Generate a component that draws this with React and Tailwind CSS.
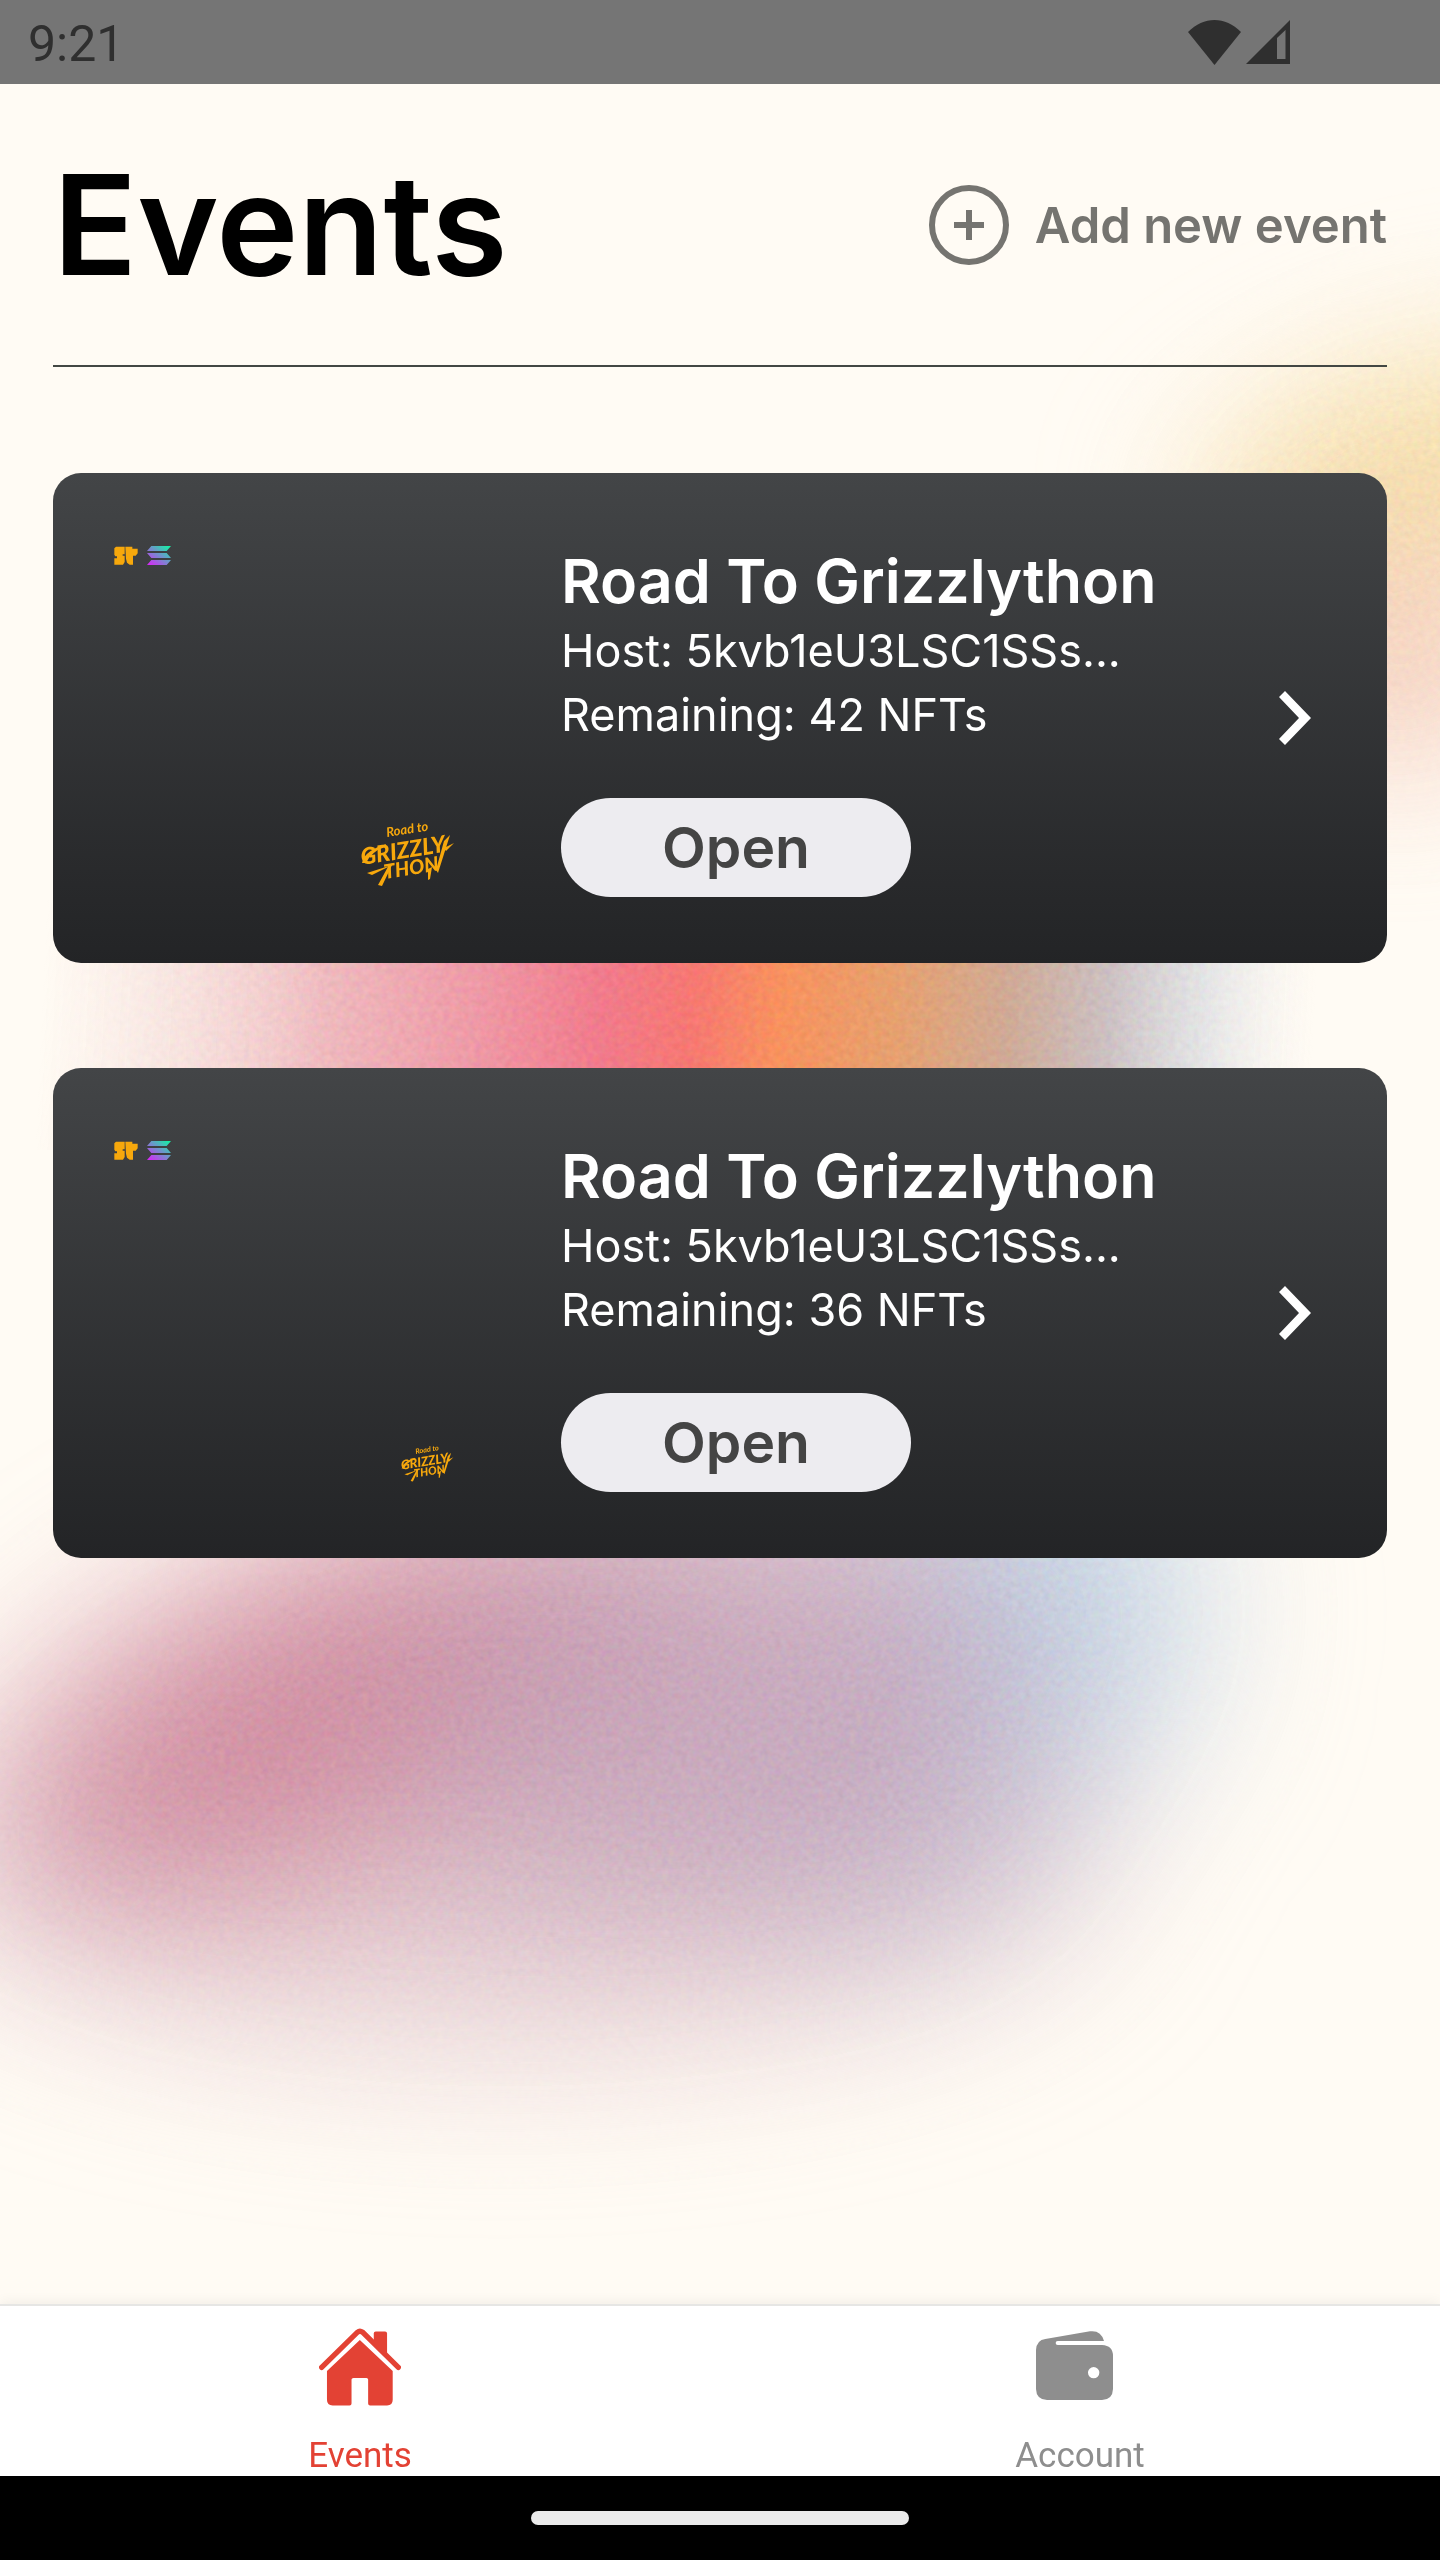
const EVENTS = [
  { id: 1, title: 'Road To Grizzlython', host: '5kvb1eU3LSC1SSs...', remaining: 42, artClass: 'h-[64px] w-[92px]' },
  { id: 2, title: 'Road To Grizzlython', host: '5kvb1eU3LSC1SSs...', remaining: 36, artClass: 'h-[36px] w-[53px]' },
];

function Backdrop() {
  return (
    <svg
      aria-hidden="true"
      className="absolute inset-0 h-full w-full"
      viewBox="0 0 1440 2304"
      preserveAspectRatio="none"
    >
      <defs>
        <filter id="soft" filterUnits="userSpaceOnUse" x="-400" y="900" width="2200" height="1800" colorInterpolationFilters="sRGB">
          <feGaussianBlur stdDeviation="85" />
        </filter>
        <filter id="softer" filterUnits="userSpaceOnUse" x="800" y="0" width="1200" height="1200" colorInterpolationFilters="sRGB">
          <feGaussianBlur stdDeviation="75" />
        </filter>
        <filter id="grain" filterUnits="userSpaceOnUse" x="0" y="0" width="1440" height="2304" colorInterpolationFilters="sRGB">
          <feTurbulence type="fractalNoise" baseFrequency="0.16" numOctaves="2" seed="4" result="noise" />
          <feColorMatrix in="noise" type="matrix" values="1 0 0 0 0.25  0 1 0 0 0.2  0 0 1 0 0.2  0 0 0 0 0.1" />
          <feComposite in2="SourceGraphic" operator="in" result="speckle" />
          <feMerge>
            <feMergeNode in="SourceGraphic" />
            <feMergeNode in="speckle" />
          </feMerge>
        </filter>
        <linearGradient id="band" gradientUnits="userSpaceOnUse" x1="40" y1="1050" x2="1310" y2="1110">
          <stop offset="0" stopColor="#fbe5e0" stopOpacity="0" />
          <stop offset="0.1" stopColor="#f9dcd9" stopOpacity="0.6" />
          <stop offset="0.22" stopColor="#f4bcc1" />
          <stop offset="0.34" stopColor="#f498a6" />
          <stop offset="0.44" stopColor="#f87588" />
          <stop offset="0.51" stopColor="#fd726c" />
          <stop offset="0.58" stopColor="#ff8f55" />
          <stop offset="0.67" stopColor="#ec9f68" />
          <stop offset="0.76" stopColor="#d2aa94" />
          <stop offset="0.84" stopColor="#cec3c6" />
          <stop offset="0.91" stopColor="#dfe1e5" stopOpacity="0.8" />
          <stop offset="1" stopColor="#f6f6f4" stopOpacity="0" />
        </linearGradient>
      </defs>
      <g filter="url(#grain)">
        <ellipse cx="1430" cy="480" rx="230" ry="110" fill="#fbe2a8" transform="rotate(-15 1430 480)" filter="url(#softer)" />
        <ellipse cx="1400" cy="650" rx="110" ry="120" fill="#f6c2ac" opacity="0.75" filter="url(#softer)" />
        <rect x="30" y="900" width="1310" height="250" fill="url(#band)" />
        <g filter="url(#soft)">
          <ellipse cx="500" cy="1850" rx="580" ry="190" fill="#dfc0ca" opacity="0.75" />
          <ellipse cx="1030" cy="1610" rx="160" ry="190" fill="#c3d6e9" />
          <ellipse cx="880" cy="1790" rx="210" ry="160" fill="#bfb4cc" opacity="0.7" />
          <ellipse cx="360" cy="1690" rx="380" ry="150" fill="#d28a9f" transform="rotate(-22 360 1690)" />
          <ellipse cx="700" cy="1690" rx="300" ry="210" fill="#c6a1b9" transform="rotate(-20 700 1690)" opacity="0.8" />
        </g>
      </g>
    </svg>
  );
}

function WifiIcon() {
  return (
    <svg aria-hidden="true" className="h-[45px] w-[53px]" viewBox="0 0 53 45">
      <path d="M0 12C8 4 17 0 26.500 0S45 4 53 12L26.500 45Z" fill="#2f2f2f" />
    </svg>
  );
}

function SignalIcon() {
  return (
    <svg aria-hidden="true" className="h-[44px] w-[44px]" viewBox="0 0 44 44">
      <path fillRule="evenodd" d="M0 44L44 0V44ZM31 18V39H39.500V10Z" fill="#2f2f2f" />
    </svg>
  );
}

function PlusCircle() {
  return (
    <svg aria-hidden="true" className="h-[80px] w-[80px]" viewBox="0 0 80 80" fill="none" stroke="currentColor" strokeWidth="6">
      <circle cx="40" cy="40" r="37" />
      <path d="M25 40H55M40 25V55" />
    </svg>
  );
}

function BadgeMark() {
  return (
    <svg aria-hidden="true" className="h-[19px] w-[24px]" viewBox="0 0 70 57" fill="#f7a80c">
      <path d="M5 2H31V25H25V29H31V48L26 56H0V37H8V31H3L0 26V7Z" />
      <path d="M33 2H54V8H70V22L64 29H56V56H46L38 50L35 38Z" />
    </svg>
  );
}

function SolanaMark() {
  return (
    <svg aria-hidden="true" className="h-[19px] w-[24px]" viewBox="0 0 72 57">
      <defs>
        <linearGradient id="sol" gradientUnits="userSpaceOnUse" x1="62" y1="-4" x2="12" y2="60">
          <stop offset="0" stopColor="#12f2a4" />
          <stop offset="1" stopColor="#d32cf5" />
        </linearGradient>
      </defs>
      <path fill="url(#sol)" d="M13 0H72L59 15H0ZM0 21H59L72 36H13ZM13 42H72L59 57H0Z" />
    </svg>
  );
}

function GrizzlythonLogo({ className }) {
  return (
    <svg className={`${className} overflow-visible`} viewBox="0 0 92 64" fill="#f7a80c" role="img" aria-label="Road to Grizzlython">
      <g className="font-['Lato',sans-serif] italic">
        <text x="25" y="14" fontSize="13" fontWeight="700" transform="rotate(-9 25 14)">Road to</text>
        <text x="0" y="42" fontSize="23" fontWeight="900" transform="rotate(-9 0 42)">GRIZZLY</text>
        <text x="23" y="56" fontSize="20" fontWeight="900" transform="rotate(-9 23 56)">THON</text>
      </g>
      <path d="M0 40Q2 28 24 21L23 24Q10 28 4 40ZM27 42L31 40L20 63L16 62ZM82 18L88 12L76 50L74 47ZM82 25L92 20L84 28ZM5 50L30 42L10 52ZM66 46L70 44L68 56L66 57Z" />
    </svg>
  );
}

function ChevronIcon() {
  return (
    <svg aria-hidden="true" className="h-[54px] w-[32px]" viewBox="0 0 32 54" fill="#ffffff">
      <path d="M6 0L32 27L6 54L0 48L20 27L0 6Z" />
    </svg>
  );
}

function HouseIcon() {
  return (
    <svg aria-hidden="true" className="h-[78px] w-[82px]" viewBox="0 0 247 234" fill="currentColor">
      <path d="M8 118L116 12Q123 6 131 12L239 118" fill="none" stroke="currentColor" strokeWidth="16" strokeLinecap="round" />
      <path d="M165 48V16Q165 10 171 10H199Q205 10 205 16V86Z" />
      <path d="M123 36L222 129V216Q222 233 205 233H154Q148 233 148 227V155Q148 150 143 150H104Q98 150 98 155V227Q98 233 92 233H41Q24 233 24 216V129Z" />
    </svg>
  );
}

function WalletIcon() {
  return (
    <svg aria-hidden="true" className="h-[69px] w-[89px] pr-3" viewBox="0 0 231 207" fill="currentColor">
      <path
        fillRule="evenodd"
        d="M0 57Q2 27 28 24L162 1Q195 -3 204 30H65Q59 30 59 36T65 42H198Q231 44 231 75V174Q230 206 198 207H33Q1 206 0 174ZM190 125A17 17 0 1 0 156 125A17 17 0 1 0 190 125Z"
      />
    </svg>
  );
}

function EventCard({ event }) {
  return (
    <article className="flex rounded-[28px] bg-linear-to-b from-[#434547] to-[#232426] text-white">
      <div className="mr-[107px] ml-[61px] flex w-[340px] shrink-0 flex-col justify-between pt-[73px] pb-[76px]">
        <div className="flex gap-[9px]">
          <BadgeMark />
          <SolanaMark />
        </div>
        <div className="flex justify-end">
          <GrizzlythonLogo className={event.artClass} />
        </div>
      </div>
      <div className="pt-[70px] pb-[66px]">
        <h2 className="text-[61px] leading-[76px] font-semibold">{event.title}</h2>
        <p className="text-[45px] leading-[64px]">Host: {event.host}</p>
        <p className="text-[45px] leading-[64px]">Remaining: {event.remaining} NFTs</p>
        <button type="button" className="mt-[51px] h-[99px] w-[350px] rounded-full bg-[#edecf0] text-[57px] leading-none font-semibold text-[#444444]">
          Open
        </button>
      </div>
      <button type="button" aria-label={`View ${event.title}`} className="mr-[76px] ml-auto self-center">
        <ChevronIcon />
      </button>
    </article>
  );
}

export default function App() {
  return (
    <div className="flex min-h-screen flex-col bg-[#fffbf4] font-['Inter',sans-serif]">
      <div className="relative flex flex-1 flex-col">
        <Backdrop />
        <div className="relative flex h-[84px] items-center justify-between bg-[#757575] pr-[150px] pl-7 font-['Roboto',sans-serif]">
          <span className="pt-1 text-[50px] leading-none text-[#2f2f2f]">9:21</span>
          <div className="flex gap-[5px]">
            <WifiIcon />
            <SignalIcon />
          </div>
        </div>
        <main className="relative flex-1 px-[53px]">
          <header className="flex items-center justify-between border-b-2 border-[#434743] pt-[71px] pb-[70px]">
            <h1 className="text-[139px] leading-[140px] font-semibold text-black">Events</h1>
            <button type="button" className="flex items-center gap-[26px] text-[49px] leading-none font-semibold text-[#757470]">
              <PlusCircle />
              Add new event
            </button>
          </header>
          <section aria-label="Event list" className="mt-[106px] mb-[105px] flex flex-col gap-[105px]">
            {EVENTS.map((event) => (
              <EventCard key={event.id} event={event} />
            ))}
          </section>
        </main>
      </div>
      <nav aria-label="Main" className="relative grid grid-cols-2 border-t-2 border-[#e6e6e4] bg-white font-['Roboto',sans-serif] text-[35px] leading-[40px] shadow-[0_-2px_12px_rgba(0,0,0,0.06)]">
        <a href="#events" aria-current="page" className="flex h-[170px] flex-col items-center justify-between pt-[22px] text-[#e34234]">
          <HouseIcon />
          Events
        </a>
        <a href="#account" className="flex h-[170px] flex-col items-center justify-between pt-[25px] text-[#8e8e8e]">
          <WalletIcon />
          Account
        </a>
      </nav>
      <div className="flex h-[84px] items-center justify-center bg-black">
        <div className="h-[14px] w-[378px] rounded-full bg-[#ebebeb]" />
      </div>
    </div>
  );
}
